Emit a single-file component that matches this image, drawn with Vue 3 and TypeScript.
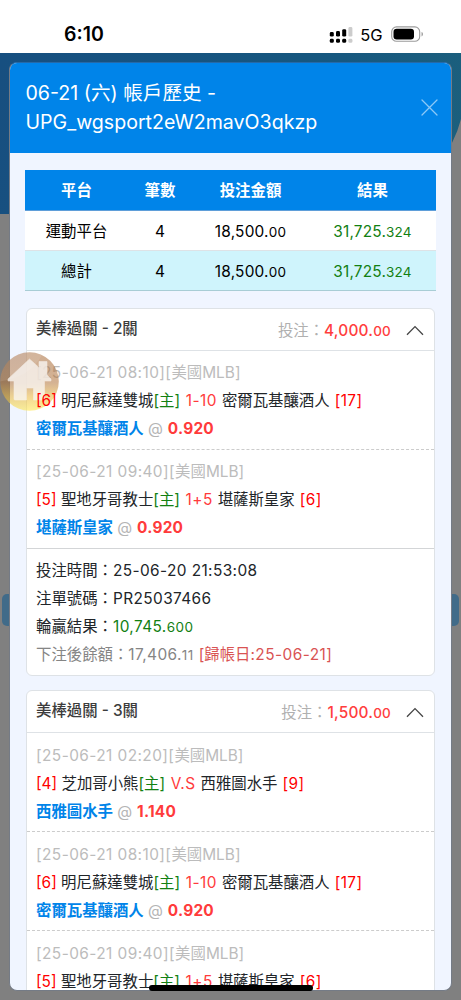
<script setup lang="ts">
interface Leg {
  time: string
  homeRank: string
  home: string
  line: string
  away: string
  awayRank: string
  pick: string
  odds: string
}
interface Ticket {
  title: string
  stake: string
  legs: Leg[]
  meta?: { time: string; no: string; win: string; winDec: string; balance: string; balanceDec: string; settle: string }
}

const brewers = (time: string): Leg => ({
  time, homeRank: '[6]', home: '明尼蘇達雙城', line: '1-10', away: '密爾瓦基釀酒人', awayRank: '[17]', pick: '密爾瓦基釀酒人', odds: '0.920',
})
const royals = (time: string): Leg => ({
  time, homeRank: '[5]', home: '聖地牙哥教士', line: '1+5', away: '堪薩斯皇家', awayRank: '[6]', pick: '堪薩斯皇家', odds: '0.920',
})

const summary = [
  { name: '運動平台', count: '4', total: false },
  { name: '總計', count: '4', total: true },
]

const tickets: Ticket[] = [
  {
    title: '美棒過關 - 2關',
    stake: '4,000.',
    legs: [brewers('25-06-21 08:10'), royals('25-06-21 09:40')],
    meta: {
      time: '25-06-20 21:53:08', no: 'PR25037466', win: '10,745.', winDec: '600',
      balance: '17,406.', balanceDec: '11', settle: '25-06-21',
    },
  },
  {
    title: '美棒過關 - 3關',
    stake: '1,500.',
    legs: [
      {
        time: '25-06-21 02:20', homeRank: '[4]', home: '芝加哥小熊', line: 'V.S', away: '西雅圖水手', awayRank: '[9]', pick: '西雅圖水手', odds: '1.140',
      },
      brewers('25-06-21 08:10'),
      royals('25-06-21 09:40'),
    ],
  },
]
</script>

<template>
  <div class="screen">
    <header class="status">
      <span class="clock">6:10</span>
      <div class="indicators">
        <svg class="signal" width="24" height="16" viewBox="0 0 24 16">
          <g fill="#000">
            <rect x="0.8" y="5" width="4" height="4.6" rx="1.4" />
            <rect x="7" y="4" width="4" height="5.6" rx="1.4" />
            <rect x="13.2" y="2.2" width="4" height="7.4" rx="1.4" />
            <rect x="0.8" y="11.8" width="4" height="4" rx="1.4" />
            <rect x="7" y="11.8" width="4" height="4" rx="1.4" />
            <rect x="13.2" y="11.8" width="4" height="4" rx="1.4" />
          </g>
          <g fill="#ccc">
            <rect x="19.4" y="0" width="4" height="9.6" rx="1.4" />
            <rect x="19.4" y="11.8" width="4" height="4" rx="1.4" />
          </g>
        </svg>
        <span class="net">5G</span>
        <svg class="battery" width="33" height="17" viewBox="0 0 33 17">
          <rect x="0.7" y="0.9" width="28" height="14.4" rx="4.8" fill="#fff" stroke="#9b9b9b" stroke-width="1.1" />
          <rect x="2.5" y="2.8" width="20.5" height="10.6" rx="3.2" fill="#000" />
          <path d="M30.5 6v4.400c1-.4 1.500-1.200 1.500-2.200s-.5-1.800-1.500-2.200z" fill="#a3a3a3" />
        </svg>
      </div>
    </header>

    <main class="stage">
      <div class="banner"></div>
      <div class="tab"></div>

      <section class="modal">
        <div class="modal-head">
          <h1>06-21 (六) 帳戶歷史 -<br /><span class="account">UPG_wgsport2eW2mavO3qkzp</span></h1>
          <svg class="close" width="17" height="17" viewBox="0 0 17 17">
            <path d="M1 1l15 15M16 1L1 16" stroke="#8cc8f7" stroke-width="1.3" stroke-linecap="round" />
          </svg>
        </div>
        <div class="modal-body">
          <div class="table">
            <div class="tr th">
              <span>平台</span><span>筆數</span><span>投注金額</span><span>結果</span>
            </div>
            <div v-for="r in summary" :key="r.name" class="tr" :class="{ total: r.total }">
              <span>{{ r.name }}</span>
              <span>{{ r.count }}</span>
              <span class="amount">18,500.<small>00</small></span>
              <span class="amount green">31,725.<small>324</small></span>
            </div>
          </div>

          <article v-for="t in tickets" :key="t.title" class="card">
            <div class="card-head">
              <span class="title">{{ t.title }}</span>
              <span class="stake">投注：<b>{{ t.stake }}<small>00</small></b></span>
              <svg class="chevron" width="18" height="11" viewBox="0 0 18 11">
                <path d="M1 9.700L9 1.600l8 8.100" fill="none" stroke="#444" stroke-width="1.300" />
              </svg>
            </div>
            <div v-for="leg in t.legs" :key="leg.time" class="leg">
              <p class="time"><span class="stamp">[{{ leg.time }}][</span>美國<span class="league">MLB]</span></p>
              <p class="match"><span class="red">{{ leg.homeRank }}</span> {{ leg.home }}<span class="green">[主]</span> <span class="line">{{ leg.line }}</span> {{ leg.away }} <span class="red away">{{ leg.awayRank }}</span></p>
              <p class="pick"><b class="blue">{{ leg.pick }}</b> <span class="at">@</span> <b class="odds">{{ leg.odds }}</b></p>
            </div>
            <div v-if="t.meta" class="meta">
              <p>投注時間：<span class="num">{{ t.meta.time }}</span></p>
              <p>注單號碼：<span class="num">{{ t.meta.no }}</span></p>
              <p>輪贏結果：<span class="num green">{{ t.meta.win }}<small>{{ t.meta.winDec }}</small></span></p>
              <p class="muted">下注後餘額：<span class="num">{{ t.meta.balance }}<small>{{ t.meta.balanceDec }}</small></span> <span class="settle">[歸帳日<span class="date">:{{ t.meta.settle }}]</span></span></p>
            </div>
          </article>
        </div>
      </section>

      <svg class="home" width="60" height="60" viewBox="0 0 60 60">
        <defs>
          <linearGradient id="homeFill" x1="0" y1="0" x2="0" y2="1">
            <stop offset="0" stop-color="#a86c3c" />
            <stop offset=".52" stop-color="#b3763e" />
            <stop offset=".75" stop-color="#e8b43c" />
            <stop offset="1" stop-color="#ffe748" />
          </linearGradient>
        </defs>
        <circle cx="29.500" cy="29.500" r="29.300" fill="url(#homeFill)" opacity=".56" />
        <path d="M0.200 29.500A29.300 29.300 0 0 1 42 3Q30 25 0.200 29.500z" fill="#fff" opacity=".1" />
        <path d="M29.500 7L39 15.500V9.500h8v13.500L51 27v2h-6.500v18q0 1-1 1H33.500V36h-7v12H15q-1 0-1-1V29H8v-2z" fill="#fbf8f5" stroke="#fbf8f5" stroke-width=".6" stroke-linejoin="round" opacity=".76" />
      </svg>
      <div class="indicator"></div>
    </main>
  </div>
</template>

<style>
html,
body {
  margin: 0;
  overflow: hidden;
}
</style>

<style scoped>
.screen {
  width: 461px;
  height: 1000px;
  overflow: hidden;
  display: flex;
  flex-direction: column;
  background: #fff;
  font-family: Inter, "Noto Sans CJK TC", sans-serif;
  font-size: 15.4px;
  color: #212529;
}
.status {
  height: 53px;
  flex: none;
  display: flex;
  justify-content: space-between;
  box-sizing: border-box;
  padding: 16px 37.500px 0 64px;
}
.clock {
  font-size: 19.500px;
  line-height: 37px;
  font-weight: 600;
  letter-spacing: 0;
  color: #000;
}
.indicators {
  display: flex;
  align-items: center;
  height: 37px;
}
.net {
  font-size: 16.500px;
  font-weight: 400;
  color: #000;
  margin: 0 8px 0 7px;
}
.stage {
  position: relative;
  flex: 1;
  min-height: 0;
  box-sizing: border-box;
  background: #808080;
  padding: 9px 9px 9px;
}
.banner {
  position: absolute;
  left: 0;
  top: 0;
  width: 461px;
  height: 161px;
  background: linear-gradient(100deg, #174f80 0%, #17587f 70%, #1c607d 100%);
  clip-path: path("M0 0H461V66Q458 78 452 90L440 161H0z");
}
.tab {
  position: absolute;
  left: 2px;
  top: 541px;
  width: 457px;
  height: 32px;
  border-radius: 5px;
  background: #416b89;
}
.modal {
  position: relative;
  height: 100%;
  box-sizing: border-box;
  display: flex;
  flex-direction: column;
  border: 1px solid #747b86;
  border-top-color: #2569a8;
  border-radius: 8px;
  background: #f0f5ff;
  overflow: hidden;
}
.modal-head {
  height: 90px;
  flex: none;
  box-sizing: border-box;
  padding: 0 13.500px 0 15.500px;
  display: flex;
  align-items: center;
  justify-content: space-between;
  background: #0084e9;
}
.close {
  margin-bottom: 2px;
}
h1 {
  margin: 0;
  font-size: 19.600px;
  line-height: 29px;
  font-weight: 400;
  color: #fff;
}
.modal-body {
  padding: 17px 16px 0;
}
.table {
  margin: 0 -1px 17px;
  color: #000;
}
.tr {
  display: grid;
  grid-template-columns: 103px 64px 117px 1fr;
  height: 40px;
  box-sizing: border-box;
  border-bottom: 1px solid #dee2e6;
  background: #fff;
  text-align: center;
  line-height: 41px;
}
.th {
  height: 41px;
  line-height: 42px;
  background: #0084e9;
  color: #fff;
  font-weight: 700;
  border-bottom-color: #5f9ed9;
}
.total {
  background: #cff4fc;
  border-bottom-color: #a8cdd5;
}
.amount {
  letter-spacing: 0.2px;
}
small {
  font-size: 13.500px;
}
.green {
  color: #128012;
}
.card {
  box-sizing: border-box;
  border: 1px solid #dee2e6;
  border-radius: 6px;
  background: #fff;
  margin-bottom: 14.300px;
}
.card-head {
  height: 41px;
  display: flex;
  padding: 0 10px 0 9px;
  border-bottom: 1px solid #dee2e6;
}
.title {
  font-weight: 500;
  line-height: 39px;
  margin-right: auto;
  color: #3c3c3c;
}
.stake {
  line-height: 43px;
  color: #b0b0b0;
}
.stake b {
  font-weight: 500;
  letter-spacing: 0.2px;
  color: #ff3d3d;
}
.chevron {
  margin: 16px 0 0 15px;
}
p {
  margin: 0;
  height: 28px;
  line-height: 28px;
  white-space: nowrap;
}
.leg {
  padding: 8px 9px 6px;
  border-bottom: 1px dashed #ccc;
}
.card:last-child .leg {
  padding: 8.500px 9px 5.500px;
}
.leg:has(+ .meta) {
  border-bottom: 1px solid #d3d5d7;
}
.time {
  color: #bcbcbc;
}
.stamp {
  letter-spacing: 0.43px;
}
.red {
  position: relative;
  z-index: 1;
  color: #f00;
}
.away {
  letter-spacing: 0.4px;
  margin-left: 0.7px;
}
.line,
.odds {
  color: #ff3b3b;
}
.line {
  letter-spacing: 0.5px;
  margin: 0 0.5px 0 1.300px;
}
.odds {
  letter-spacing: 0.25px;
}
.blue {
  color: #0084e9;
}
.at {
  color: #b4b4b4;
  margin-right: 0.5px;
}
.meta {
  padding: 8px 9px 6px;
}
.num {
  letter-spacing: 0.4px;
}
.muted {
  color: #858585;
}
.settle {
  color: #d95353;
  margin-left: 0.8px;
}
.date {
  letter-spacing: 0.45px;
}
.home {
  position: absolute;
  left: 0;
  top: 299px;
}
.indicator {
  position: absolute;
  z-index: 2;
  left: 149px;
  top: 932px;
  width: 164px;
  height: 5.500px;
  border-radius: 3px;
  background: #000;
}
</style>
